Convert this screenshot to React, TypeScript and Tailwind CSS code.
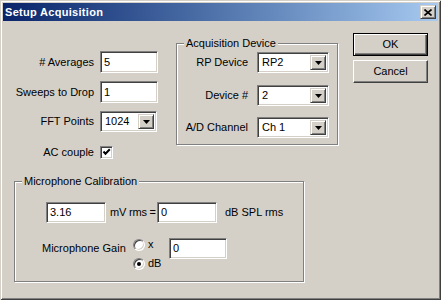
const sunken =
  "bg-white border border-t-[#808080] border-l-[#808080] border-b-white border-r-white shadow-[inset_1px_1px_0_#404040,inset_-1px_-1px_0_#d4d0c8]"
const raised =
  "bg-[#d4d0c8] border border-t-[#d4d0c8] border-l-[#d4d0c8] border-b-[#404040] border-r-[#404040] shadow-[inset_1px_1px_0_#fff,inset_-1px_-1px_0_#808080]"

type box = { className: string; value: string }

const Edit = ({ className, value }: box) => (
  <div className={`${sunken} ${className} flex items-center pl-[3px] text-[11px] leading-[13px]`}>
    {value}
  </div>
)

const Combo = ({ className, value }: box) => (
  <div className={`${sunken} ${className} flex items-stretch p-[2px] text-[11px] leading-[13px]`}>
    <div className="flex-1 flex items-center pl-[2px]">{value}</div>
    <div className={`${raised} w-[16px] flex items-center justify-center`}>
      <svg width="7" height="4" viewBox="0 0 7 4">
        <path d="M0 0H7L3.5 4Z" fill="#000" />
      </svg>
    </div>
  </div>
)

const Group = ({ title, className, children }: { title: string; className: string; children: React.ReactNode }) => (
  <div
    className={`relative border border-[#808080] shadow-[inset_1px_1px_0_#fff,1px_1px_0_#fff] ${className}`}
  >
    <span className="absolute -top-[7px] left-[7px] bg-[#d4d0c8] px-[2px] text-[11px] leading-[13px] whitespace-nowrap">
      {title}
    </span>
    {children}
  </div>
)

const Radio = ({ on }: { on?: boolean }) => (
  <div className="w-[12px] h-[12px] rounded-full bg-white border border-t-[#808080] border-l-[#808080] border-b-white border-r-white shadow-[inset_1px_1px_0_#404040,inset_-1px_-1px_0_#d4d0c8] flex items-center justify-center">
    {on && <div className="w-[4px] h-[4px] rounded-full bg-black" />}
  </div>
)

const Btn = ({ label, def }: { label: string; def?: boolean }) => (
  <div
    className={`w-[75px] h-[23px] flex items-center justify-center text-[11px] leading-[13px] ${
      def
        ? "border border-black shadow-[inset_1px_1px_0_#fff,inset_-1px_-1px_0_#404040,inset_-2px_-2px_0_#808080]"
        : "border border-t-white border-l-white border-b-[#404040] border-r-[#404040] shadow-[inset_-1px_-1px_0_#808080]"
    }`}
  >
    {label}
  </div>
)

export default function App() {
  return (
    <div className="w-[441px] h-[300px] bg-[#d4d0c8] p-[3px] flex flex-col text-black font-['Liberation_Sans',Arial,sans-serif] shadow-[inset_1px_1px_0_#d4d0c8,inset_-1px_-1px_0_#404040,inset_2px_2px_0_#fff,inset_-2px_-2px_0_#808080]">
      {/* title bar */}
      <div className="h-[18px] flex items-center pl-[2px] bg-gradient-to-r from-[#0a246a] to-[#a6caf0]">
        <span className="text-white font-bold text-[11px] leading-[13px] tracking-[0.3px]">Setup Acquisition</span>
        <div className={`${raised} ml-auto mr-[2px] w-[16px] h-[14px] flex items-center justify-center`}>
          <svg width="8" height="7" viewBox="0 0 8 7">
            <path d="M0.5 0.5L7.5 6.5M7.5 0.5L0.5 6.5" stroke="#000" strokeWidth="1.6" />
          </svg>
        </div>
      </div>

      {/* top area */}
      <div className="flex items-start h-[137px]">
        <div className="pl-[10px] pt-[30px] flex flex-col text-[11px] leading-[13px] whitespace-nowrap">
          <div className="flex items-center h-[22px]">
            <span className="w-[81px] text-right">
              # Averages
            </span>
            <Edit className="ml-[6px] w-[58px] h-[22px]" value="5" />
          </div>
          <div className="flex items-center h-[22px] mt-[8px]">
            <span className="w-[81px] text-right">Sweeps to Drop</span>
            <Edit className="ml-[6px] w-[58px] h-[22px]" value="1" />
          </div>
          <div className="flex items-center h-[21px] mt-[8px]">
            <span className="w-[81px] text-right">FFT Points</span>
            <Combo className="ml-[6px] w-[57px] h-[21px]" value="1024" />
          </div>
          <div className="flex items-center h-[13px] mt-[14px]">
            <span className="w-[81px] text-right">AC couple</span>
            <div className={`${sunken} ml-[6px] w-[13px] h-[13px] flex items-center justify-center`}>
              <svg width="9" height="9" viewBox="0 0 9 9">
                <path d="M1.5 3.5L3.5 5.8L7.8 1.2" stroke="#000" strokeWidth="2" fill="none" />
              </svg>
            </div>
          </div>
        </div>

        <Group title="Acquisition Device" className="ml-[18px] mt-[22px] w-[162px] h-[102px]">
          <div className="pl-[8px] pt-[8px] flex flex-col text-[11px] leading-[13px] whitespace-nowrap">
            <div className="flex items-center h-[21px]">
              <span className="w-[63px] text-right">RP Device</span>
              <Combo className="ml-[9px] w-[72px] h-[21px]" value="RP2" />
            </div>
            <div className="flex items-center h-[21px] mt-[12px]">
              <span className="w-[63px] text-right">Device #</span>
              <Combo className="ml-[9px] w-[72px] h-[21px]" value="2" />
            </div>
            <div className="flex items-center h-[21px] mt-[11px]">
              <span className="w-[63px] text-right">A/D Channel</span>
              <Combo className="ml-[9px] w-[72px] h-[21px]" value="Ch 1" />
            </div>
          </div>
        </Group>

        <div className="ml-[15px] mt-[12px] flex flex-col gap-[4px]">
          <Btn label="OK" def />
          <Btn label="Cancel" />
        </div>
      </div>

      {/* microphone calibration */}
      <Group title="Microphone Calibration" className="ml-[11px] mt-[23px] w-[290px] h-[101px]">
        <div className="flex flex-col text-[11px] leading-[13px] whitespace-nowrap">
          <div className="flex items-center h-[21px] mt-[20px] ml-[31px]">
            <Edit className="w-[60px] h-[21px]" value="3.16" />
            <span className="w-[51px] pl-[4px] tracking-[-0.2px]">mV rms =</span>
            <Edit className="w-[60px] h-[21px]" value="0" />
            <span className="ml-[8px]">dB SPL rms</span>
          </div>
          <div className="flex items-start mt-[15px] ml-[27px]">
            <span className="w-[91px] h-[21px] flex items-center">Microphone Gain</span>
            <div className="w-[36px] flex flex-col gap-[6px]">
              <div className="flex items-center gap-[3px]">
                <Radio />
                <span>x</span>
              </div>
              <div className="flex items-center gap-[3px]">
                <Radio on />
                <span>dB</span>
              </div>
            </div>
            <Edit className="w-[58px] h-[21px]" value="0" />
          </div>
        </div>
      </Group>
    </div>
  )
}
